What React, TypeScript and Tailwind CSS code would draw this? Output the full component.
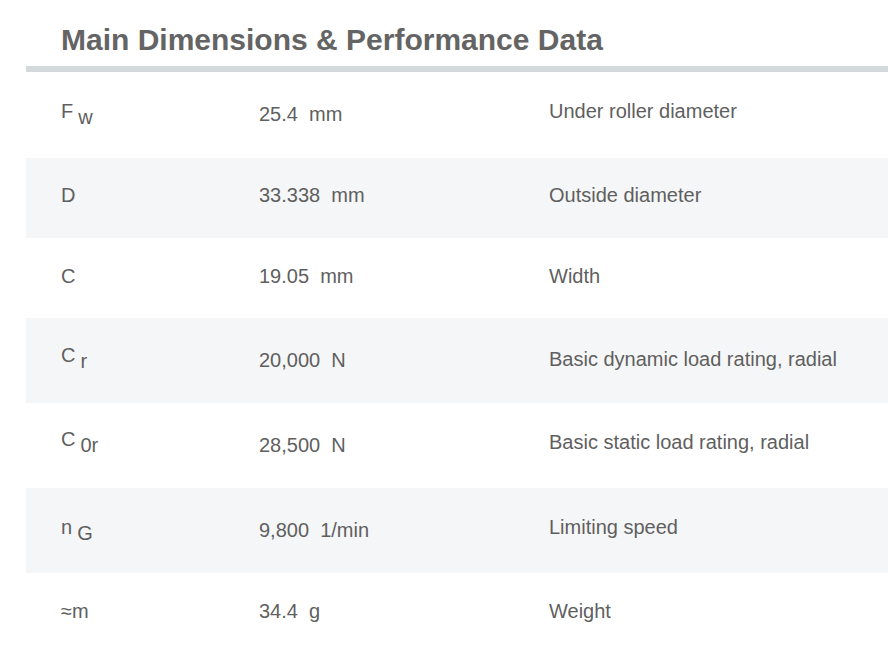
const rows = [
  { sym: 'F', sub: 'w', value: '25.4  mm', desc: 'Under roller diameter', h: 'h-[86px]', sp: 'pt-[27px]', vp: 'pt-[30px]', dp: 'pt-[27px]' },
  { sym: 'D', value: '33.338  mm', desc: 'Outside diameter', h: 'h-[80px]', sp: 'pt-[25px]', vp: 'pt-[25px]', dp: 'pt-[25px]' },
  { sym: 'C', value: '19.05  mm', desc: 'Width', h: 'h-[80px]', sp: 'pt-[26px]', vp: 'pt-[26px]', dp: 'pt-[26px]' },
  { sym: 'C', sub: 'r', value: '20,000  N', desc: 'Basic dynamic load rating, radial', h: 'h-[85px]', sp: 'pt-[25px]', vp: 'pt-[30px]', dp: 'pt-[29px]' },
  { sym: 'C', sub: '0r', value: '28,500  N', desc: 'Basic static load rating, radial', h: 'h-[85px]', sp: 'pt-[24px]', vp: 'pt-[30px]', dp: 'pt-[27px]' },
  { sym: 'n', sub: 'G', value: '9,800  1/min', desc: 'Limiting speed', h: 'h-[85px]', sp: 'pt-[27px]', vp: 'pt-[30px]', dp: 'pt-[27px]' },
  { sym: '≈m', value: '34.4  g', desc: 'Weight', h: 'h-[80px]', sp: 'pt-[26px]', vp: 'pt-[26px]', dp: 'pt-[26px]' },
];

export default function App() {
  return (
    <div className="min-h-screen bg-white font-['Liberation_Sans',Arial,sans-serif] text-[#5f5f5f]">
      <div className="pl-[26px]">
        <h2 className="pl-[35px] pt-[22px] pb-[8px] text-[30px] leading-[36px] font-bold text-[#646464]">
          Main Dimensions &amp; Performance Data
        </h2>
        <div className="h-[6px] bg-[#d4d9dc]"></div>
        <div>
          {rows.map((r, i) => (
            <div
              key={i}
              className={`flex items-start text-[20px] leading-[24px] ${r.h} ${i % 2 === 1 ? 'bg-[#f5f6f7]' : 'bg-white'}`}
            >
              <div className={`w-[233px] pl-[35px] whitespace-pre ${r.sp}`}>
                {r.sym}
                {r.sub && (
                  <span className="relative top-[6px] ml-[5px]">{r.sub}</span>
                )}
              </div>
              <div className={`w-[290px] whitespace-pre ${r.vp}`}>{r.value}</div>
              <div className={r.dp}>{r.desc}</div>
            </div>
          ))}
        </div>
      </div>
    </div>
  );
}
